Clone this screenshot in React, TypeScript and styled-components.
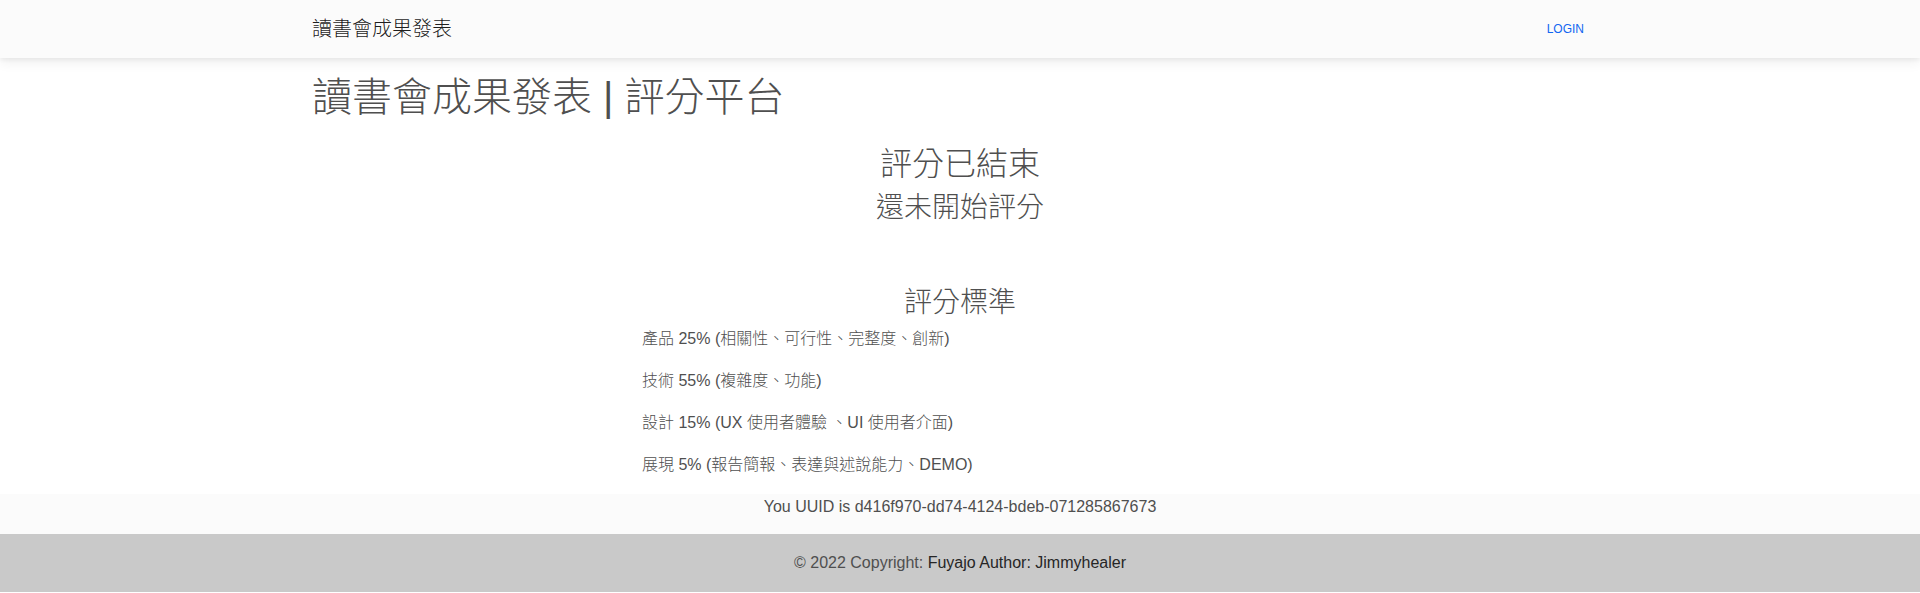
import React from "react";
import styled, { createGlobalStyle } from "styled-components";

const GlobalStyle = createGlobalStyle`
  * { box-sizing: border-box; }
  html, body { margin: 0; padding: 0; background: #fff; }
  body {
    font-family: "Liberation Sans", Arial, "Noto Sans CJK TC", sans-serif;
    font-size: 16px;
    font-weight: 300;
    line-height: 1.6;
    color: #4f4f4f;
  }
`;

const Page = styled.div`
  display: flex;
  flex-direction: column;
`;

const NavBar = styled.nav`
  background: #fbfbfb;
  height: 58px;
  display: flex;
  align-items: center;
  box-shadow: 0 4px 12px 0 rgba(0, 0, 0, 0.07), 0 2px 4px rgba(0, 0, 0, 0.05);
  position: relative;
  z-index: 2;
`;

const Container = styled.div`
  width: 100%;
  max-width: 1320px;
  margin: 0 auto;
  padding: 0 12px;
`;

const NavInner = styled(Container)`
  display: flex;
  align-items: center;
  justify-content: space-between;
`;

const Brand = styled.a`
  font-size: 20px;
  font-weight: 300;
  line-height: 30px;
  color: rgba(0, 0, 0, 0.9);
  text-decoration: none;
`;

const LoginButton = styled.button`
  background: transparent;
  border: 0;
  font-family: inherit;
  font-size: 12px;
  font-weight: 500;
  line-height: 1.5;
  text-transform: uppercase;
  color: #1266f1;
  padding: 10px 24px;
  cursor: pointer;
`;

const Main = styled(Container)`
  padding-top: 15px;
`;

const Title = styled.h1`
  font-size: 40px;
  font-weight: 300;
  line-height: 1.2;
  margin: 0 0 8px;
  color: #4f4f4f;
`;

const Status = styled.div`
  text-align: center;
  margin-top: 24px;
`;

const Heading = styled.h2<{ $size: number }>`
  font-size: ${(p) => p.$size}px;
  font-weight: 300;
  line-height: 1.2;
  margin: 0 0 8px;
  color: #4f4f4f;
`;

const Criteria = styled.section`
  width: 636px;
  margin: 61px auto 0;
`;

const CriteriaTitle = styled(Heading)`
  text-align: center;
  margin-bottom: 6px;
`;

const Item = styled.p`
  margin: 0 0 16px;
  font-size: 16px;
  line-height: 26px;
`;

const UuidBand = styled.div`
  background: #fbfbfb;
  text-align: center;
`;

const UuidText = styled.p`
  margin: 0 0 15px;
`;

const Footer = styled.footer`
  background: #c9c9c9;
  text-align: center;
  padding: 16px;
  color: #4f4f4f;
`;

const FooterLink = styled.a`
  color: #262626;
  text-decoration: none;
`;

const items = [
  "產品 25% (相關性、可行性、完整度、創新)",
  "技術 55% (複雜度、功能)",
  "設計 15% (UX 使用者體驗 、UI 使用者介面)",
  "展現 5% (報告簡報、表達與述說能力、DEMO)",
];

export default function App() {
  return (
    <Page>
      <GlobalStyle />
      <NavBar>
        <NavInner>
          <Brand href="#">讀書會成果發表</Brand>
          <LoginButton>Login</LoginButton>
        </NavInner>
      </NavBar>
      <Main>
        <Title>讀書會成果發表 | 評分平台</Title>
        <Status>
          <Heading $size={32}>評分已結束</Heading>
          <Heading as="h3" $size={28}>
            還未開始評分
          </Heading>
        </Status>
        <Criteria>
          <CriteriaTitle as="h3" $size={28}>
            評分標準
          </CriteriaTitle>
          {items.map((t) => (
            <Item key={t}>{t}</Item>
          ))}
        </Criteria>
      </Main>
      <UuidBand>
        <UuidText>You UUID is d416f970-dd74-4124-bdeb-071285867673</UuidText>
      </UuidBand>
      <Footer>
        © 2022 Copyright: <FooterLink href="#">Fuyajo Author: Jimmyhealer</FooterLink>
      </Footer>
    </Page>
  );
}
